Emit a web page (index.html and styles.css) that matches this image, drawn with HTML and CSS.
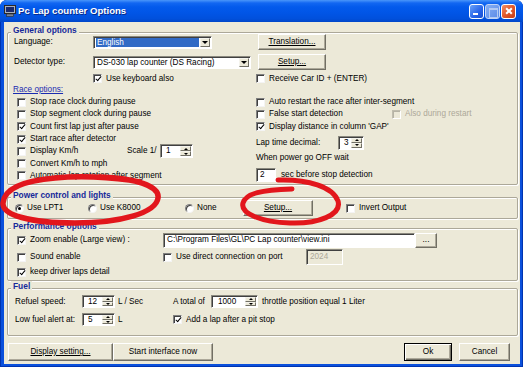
FILE: index.html
```html
<!DOCTYPE html>
<html>
<head>
<meta charset="utf-8">
<title>Pc Lap counter Options</title>
<link rel="stylesheet" href="styles.css">
</head>
<body>
<div class="window">
  <div class="titlebar">
    <svg class="appicon" viewBox="0 0 12 12"><rect x="0.5" y="0.5" width="11" height="8" fill="#A9B0BE" stroke="#2a2a2a"/><rect x="2" y="2" width="8" height="5" fill="#1B2A6B"/><rect x="2.5" y="9" width="7" height="2.5" fill="#7C8596" stroke="#2a2a2a" stroke-width=".6"/></svg>
    <span class="title">Pc Lap counter Options</span>
    <div class="tbtns">
      <span class="tb tb-min"></span>
      <span class="tb tb-max"></span>
      <span class="tb tb-close"></span>
    </div>
  </div>
  <div class="client">
    <div class="group g-general">
      <div class="legend">General options</div>
      <div class="row r-lang">
        <span class="w79">Language:</span>
        <div class="combo w119"><span class="ctext sel">English</span><span class="drop"></span></div>
        <button class="btn b-trans"><span class="ul">Translation...</span></button>
      </div>
      <div class="row r-det">
        <span class="w79">Detector type:</span>
        <div class="combo w158"><span class="ctext">DS-030 lap counter (DS Racing)</span><span class="drop"></span></div>
        <button class="btn b-setup1"><span class="ul">Setup...</span></button>
      </div>
      <div class="row r-kbd">
        <label class="chk w163"><span class="box on"></span>Use keyboard also</label>
        <label class="chk"><span class="box"></span>Receive Car ID + (ENTER)</label>
      </div>
      <div class="row r-link"><span class="link">Race options:</span></div>
      <div class="cols">
        <div class="col col-left">
          <label class="chk"><span class="box"></span>Stop race clock during pause</label>
          <label class="chk"><span class="box"></span>Stop segment clock during pause</label>
          <label class="chk"><span class="box on"></span>Count first lap just after pause</label>
          <label class="chk"><span class="box on"></span>Start race after detector</label>
          <div class="crow">
            <label class="chk w110"><span class="box"></span>Display Km/h</label>
            <span class="w33">Scale 1/</span>
            <div class="spin w33 h14"><span class="val">1</span><span class="arrows"><i class="up"></i><i class="dn"></i></span></div>
          </div>
          <label class="chk"><span class="box"></span>Convert Km/h to mph</label>
          <label class="chk"><span class="box"></span>Automatic lap rotation after segment</label>
        </div>
        <div class="col col-right">
          <label class="chk rr"><span class="box"></span>Auto restart the race after inter-segment</label>
          <div class="crow rr">
            <label class="chk w136"><span class="box"></span>False start detection</label>
            <label class="chk dis"><span class="box"></span>Also during restart</label>
          </div>
          <label class="chk rr"><span class="box on"></span>Display distance in column 'GAP'</label>
          <div class="crow r-lap">
            <span class="w82">Lap time decimal:</span>
            <div class="spin w26 h14"><span class="val">3</span><span class="arrows"><i class="up"></i><i class="dn"></i></span></div>
          </div>
          <div class="crow r-pw">When power go OFF wait</div>
          <div class="crow r-wait">
            <span class="input w20 h14">2</span>
            <span class="sec">sec before stop detection</span>
          </div>
        </div>
      </div>
    </div>

    <div class="group g-power">
      <div class="legend">Power control and lights</div>
      <div class="row r-power">
        <label class="opt w73"><span class="radio on"></span>Use LPT1</label>
        <label class="opt w97"><span class="radio"></span>Use K8000</label>
        <label class="opt w58"><span class="radio"></span>None</label>
        <button class="btn b-setup2"><span class="ul">Setup...</span></button>
        <label class="chk invert"><span class="box"></span>Invert Output</label>
      </div>
    </div>

    <div class="group g-perf">
      <div class="legend">Performance options</div>
      <div class="row r-p1">
        <label class="chk w146"><span class="box on"></span>Zoom enable (Large view) :</label>
        <span class="input w252 h15">C:\Program Files\GL\PC Lap counter\view.ini</span>
        <button class="btn b-dots">...</button>
      </div>
      <div class="row r-p2">
        <label class="chk w146"><span class="box"></span>Sound enable</label>
        <label class="chk w143"><span class="box"></span>Use direct connection on port</label>
        <span class="input dis w37 h16">2024</span>
      </div>
      <div class="row r-p3">
        <label class="chk"><span class="box on"></span>keep driver laps detail</label>
      </div>
    </div>

    <div class="group g-fuel">
      <div class="legend">Fuel</div>
      <div class="row r-f1">
        <span class="w67">Refuel speed:</span>
        <div class="spin w33 h13"><span class="val">12</span><span class="arrows"><i class="up"></i><i class="dn"></i></span></div>
        <span class="unit">L / Sec</span>
        <span class="w38">A total of</span>
        <div class="spin w47 h13"><span class="val v1000">1000</span><span class="arrows"><i class="up"></i><i class="dn"></i></span></div>
        <span class="thr">throttle position equal 1 Liter</span>
      </div>
      <div class="row r-f2">
        <span class="w67">Low fuel alert at:</span>
        <div class="spin w33 h13"><span class="val">5</span><span class="arrows"><i class="up"></i><i class="dn"></i></span></div>
        <span class="unit">L</span>
        <label class="chk"><span class="box on"></span>Add a lap after a pit stop</label>
      </div>
    </div>

    <div class="bottom">
      <button class="btn b-disp"><span class="ul">Display setting...</span></button>
      <button class="btn b-start">Start interface now</button>
      <button class="btn b-ok">Ok</button>
      <button class="btn b-cancel">Cancel</button>
    </div>
  </div>

  <svg class="marks" width="523" height="367" viewBox="0 0 523 367">
    <path d="M100 177 C135 178, 160 186, 158 198 C156 213, 120 223, 75 223 C30 223, 2 215, 3 203 C4 190, 20 181, 55 178 C75 176, 110 176, 140 182" fill="none" stroke="#E2161C" stroke-width="5.5" stroke-linecap="round"/>
    <path d="M278 180 C308 179, 333 187, 338 201 C342 215, 318 224, 290 223 C262 222, 240 214, 243 203 C246 193, 262 190, 292 189" fill="none" stroke="#E2161C" stroke-width="5" stroke-linecap="round"/>
  </svg>
</div>
</body>
</html>
```

FILE: styles.css
```css
* { box-sizing: border-box; margin: 0; padding: 0; }
html, body { width: 523px; height: 367px; overflow: hidden; background: #fff; }
body { font-family: "Liberation Sans", Arial, sans-serif; font-size: 8.2px; line-height: 10px; color: #000; }

.window { position: relative; width: 523px; height: 367px; display: flex; flex-direction: column; background: #0A50DC; border-radius: 7px 7px 0 0; box-shadow: inset 0 0 0 1px #0034B0; }

.titlebar { flex: none; height: 22px; display: flex; align-items: center; padding: 0 7px 0 4px; border-radius: 7px 7px 0 0; background: linear-gradient(#4A96FA 0, #1267F2 3px, #035AEC 7px, #0155E6 60%, #0150DC 85%, #0046C8 100%); }
.appicon { width: 12px; height: 12px; flex: none; }
.title { flex: 1; margin-left: 2px; color: #fff; font-weight: bold; font-size: 9.6px; text-shadow: 1px 1px 0 #0A2A8A; white-space: nowrap; }
.tbtns { display: flex; gap: 1px; }
.tb { position: relative; width: 15px; height: 15px; border: 1px solid #fff; border-radius: 3px; }
.tb-min { background: linear-gradient(135deg, #6AA3FA, #2763E8 60%, #1A50D0); }
.tb-min::after { content: ""; position: absolute; left: 3px; bottom: 3px; width: 5px; height: 2px; background: #fff; }
.tb-max { background: linear-gradient(135deg, #86AEF3, #5A8AE8); border-color: #C2D5F7; }
.tb-max::after { content: ""; position: absolute; left: 3px; top: 3px; width: 7px; height: 7px; border: 1px solid #B2C9F3; border-top-width: 2px; }
.tb-close { background: linear-gradient(135deg, #F29068, #E2582A 50%, #C63E16); }
.tb-close::before, .tb-close::after { content: ""; position: absolute; left: 2.5px; top: 5.5px; width: 8px; height: 2px; background: #fff; transform: rotate(45deg); }
.tb-close::after { transform: rotate(-45deg); }

.client { flex: 1; margin: 0 3px 3px 4px; padding: 0 2px 0 3px; background: #ECE9D8; display: flex; flex-direction: column; }

.group { flex: none; border: 1px solid #ACA899; border-radius: 2px; box-shadow: inset 1px 1px 0 #fff, 1px 1px 0 #fff; padding: 0 6px 2px 6px; }
.legend { width: max-content; height: 11px; line-height: 11px; margin: -8px 0 -3px -3px; padding: 0 2px; background: #ECE9D8; color: #17299A; font-weight: bold; font-size: 8.4px; }

.g-general { margin-top: 10px; }
.g-power { margin-top: 12px; }
.g-power .legend { margin-bottom: -1px; }
.g-perf { margin-top: 9px; }
.g-perf .legend { margin-bottom: 0; }
.g-fuel { margin-top: 7px; padding-bottom: 9px; }
.g-fuel .legend { margin-bottom: 3px; }

.row { display: flex; align-items: center; white-space: nowrap; }
.r-lang { height: 16px; margin-top: 1px; }
.r-det { height: 16px; margin-top: 4px; }
.r-kbd { height: 11px; margin-top: 3px; padding-left: 79px; }
.r-link { height: 12px; margin-left: -1px; }
.link { color: #1B2BB0; text-decoration: underline; }

.w20 { width: 20px; flex: none; }
.w26 { width: 26px; flex: none; }
.w33 { width: 33px; flex: none; }
.w37 { width: 37px; flex: none; }
.w38 { width: 38px; flex: none; }
.w47 { width: 47px; flex: none; }
.w58 { width: 58px; flex: none; }
.w67 { width: 67px; flex: none; }
.w73 { width: 73px; flex: none; }
.w79 { width: 79px; flex: none; }
.w82 { width: 82px; flex: none; }
.w97 { width: 97px; flex: none; }
.w110 { width: 110px; flex: none; }
.w119 { width: 119px; flex: none; }
.w136 { width: 136px; flex: none; }
.w143 { width: 143px; flex: none; }
.w146 { width: 146px; flex: none; }
.w158 { width: 158px; flex: none; }
.w163 { width: 163px; flex: none; }
.w252 { width: 252px; flex: none; }
.h13 { height: 13px; }
.h14 { height: 14px; }
.h15 { height: 15px; }
.h16 { height: 16px; }

/* sunken fields */
.combo, .input, .spin { background: #fff; border: 1px solid; border-color: #8A887E #FFFFFF #FFFFFF #8A887E; box-shadow: inset 1px 1px 0 #404040; }
.combo { display: flex; height: 13px; padding: 1px 1px 1px 1px; }
.ctext { flex: 1; display: flex; align-items: center; padding-left: 2px; line-height: 9px; overflow: hidden; }
.ctext.sel { margin-left: 1px; padding-left: 1px; background: #316AC5; color: #fff; }
.drop { width: 10px; flex: none; margin-left: 1px; }
.input { display: flex; align-items: center; padding-left: 3px; overflow: hidden; white-space: nowrap; }
.input.dis { background: #ECE9D8; color: #ACA899; }
.spin { display: flex; padding: 1px; }
.val { flex: 1; display: flex; align-items: center; padding-left: 4px; }
.v1000 { padding-left: 5px; }
.arrows { width: 11px; flex: none; display: flex; flex-direction: column; }
.arrows i, .drop { display: flex; align-items: center; justify-content: center; background: #ECE9D8; border: 1px solid; border-color: #F4F3EC #716F64 #716F64 #F4F3EC; }
.arrows i { flex: 1; }
.arrows .up::after { content: ""; border-left: 2.5px solid transparent; border-right: 2.5px solid transparent; border-bottom: 2.5px solid #000; }
.arrows .dn::after, .drop::after { content: ""; border-left: 2.5px solid transparent; border-right: 2.5px solid transparent; border-top: 2.5px solid #000; }
.drop::after { border-left-width: 3px; border-right-width: 3px; border-top-width: 3px; }

/* buttons */
.btn { font: inherit; color: #000; background: #ECE9D8; border: 1px solid; border-color: #FFFFFF #716F64 #716F64 #FFFFFF; box-shadow: inset -1px -1px 0 #ACA899; display: flex; align-items: center; justify-content: center; flex: none; white-space: nowrap; }
.ul { text-decoration: underline; }
.b-trans { width: 68px; height: 16px; margin-left: 46px; }
.b-setup1 { width: 68px; height: 16px; margin-left: 7px; }
.b-setup2 { width: 70px; height: 16px; }
.b-dots { width: 22px; height: 15px; }

/* checkboxes & radios */
.chk, .opt { display: flex; align-items: center; gap: 4px; white-space: nowrap; }
.opt { gap: 3px; }
.box { position: relative; flex: none; width: 9px; height: 9px; background: #fff; border: 1px solid; border-color: #808080 #F4F4F4 #F4F4F4 #808080; box-shadow: inset 1px 1px 0 #404040; }
.box.on::after { content: ""; position: absolute; left: 2.5px; top: 0; width: 2px; height: 5px; border: solid #000; border-width: 0 1.5px 1.5px 0; transform: rotate(40deg); }
.chk.dis { color: #ACA899; }
.chk.dis .box { background: #ECE9D8; border-color: #C0BDAE #fff #fff #C0BDAE; box-shadow: inset 1px 1px 0 #B6B3A5; }
.radio { position: relative; flex: none; width: 9px; height: 9px; border-radius: 50%; background: #fff; border: 1px solid; border-color: #808080 #F4F4F4 #F4F4F4 #808080; box-shadow: inset 1px 1px 0 #404040; }
.radio.on::after { content: ""; position: absolute; left: 2px; top: 2px; width: 3px; height: 3px; border-radius: 50%; background: #000; }

/* race option columns */
.cols { display: flex; }
.col { display: flex; flex-direction: column; }
.col-left { width: 242px; flex: none; padding-left: 3px; }
.col-left > * { height: 12.3px; display: flex; align-items: center; white-space: nowrap; }
.crow { display: flex; align-items: center; white-space: nowrap; }
.rr { height: 12.3px; }
.r-lap { height: 16px; margin-top: 2px; }
.r-pw { height: 12px; margin-top: 1px; }
.r-wait { height: 14px; margin-top: 4px; }
.sec { margin-left: 5px; }

/* power */
.r-power { height: 16px; padding-left: 1px; }
.invert { margin-left: 33px; }

/* performance */
.r-p1 { height: 16px; padding-left: 3px; }
.r-p2 { height: 16px; margin-top: 1px; padding-left: 3px; }
.r-p3 { height: 12px; margin-top: 1px; padding-left: 3px; }

/* fuel */
.r-f1 { height: 13px; padding-left: 1px; }
.r-f2 { height: 13px; margin-top: 5px; padding-left: 1px; }
.unit { width: 55px; flex: none; margin-left: 3px; }
.thr { margin-left: 4px; }

/* bottom buttons */
.bottom { display: flex; margin-top: 7px; padding: 0 8px 0 1px; height: 18px; }
.b-disp { width: 105px; height: 18px; }
.b-start { width: 100px; height: 18px; }
.b-ok { width: 48px; height: 18px; margin-left: auto; border: 1px solid #000; box-shadow: inset 1px 1px 0 #fff, inset -1px -1px 0 #716F64, inset -2px -2px 0 #ACA899; }
.b-cancel { width: 51px; height: 18px; margin-left: 7px; }

.marks { position: absolute; left: 0; top: 0; pointer-events: none; }
```
